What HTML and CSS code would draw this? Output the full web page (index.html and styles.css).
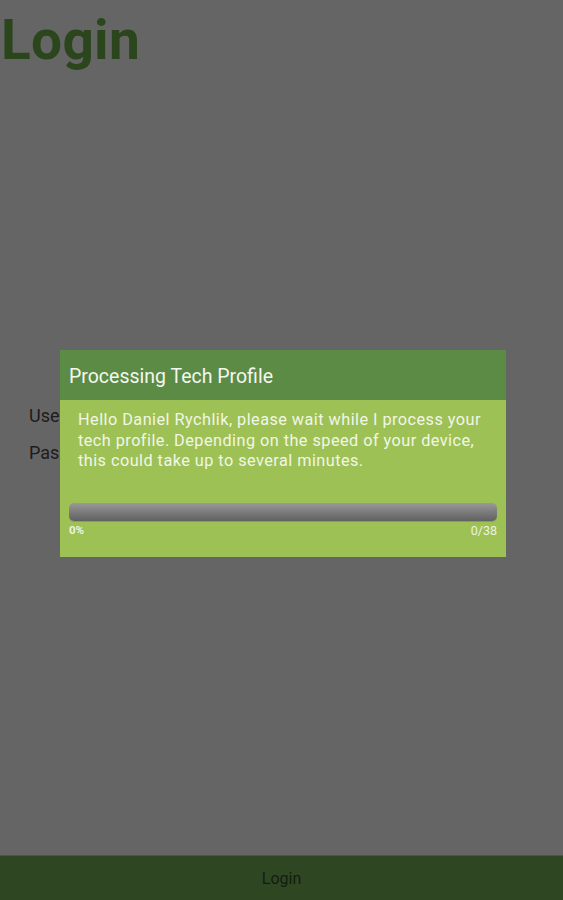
FILE: index.html
```html
<!DOCTYPE html>
<html>
<head>
<meta charset="utf-8">
<link rel="stylesheet" href="styles.css">
</head>
<body>
<div class="screen">
  <h1 class="title">Login</h1>
  <div class="form">
    <div class="label">Username</div>
    <div class="label">Password</div>
  </div>
  <div class="footer">Login</div>
  <div class="dialog">
    <div class="dialog-head">Processing Tech Profile</div>
    <div class="dialog-body">
      <p class="msg">Hello Daniel Rychlik, please wait while I process your tech profile. Depending on the speed of your device, this could take up to several minutes.</p>
      <div class="bar"></div>
      <div class="bar-labels"><span class="pct">0%</span><span class="count">0/38</span></div>
    </div>
  </div>
</div>
</body>
</html>
```
FILE: styles.css
```css
html, body { margin: 0; padding: 0; }
body { font-family: Roboto, "Noto Sans", sans-serif; background: #666566; }
.screen { position: relative; width: 563px; height: 900px; display: flex; flex-direction: column; overflow: hidden; }
.title { margin: 0; padding: 8px 0 0 1px; font-size: 55px; font-weight: 700; color: #2b461c; line-height: 64px; letter-spacing: 0.3px; }
.form { flex: 1; padding: 334px 0 0 29px; }
.label { font-size: 18px; color: #1c1c1c; line-height: 20px; height: 37px; }
.footer { height: 44px; background: #2f4623; border-top: 1px solid #465a3c; color: #141d0f; font-size: 16px; display: flex; align-items: center; justify-content: center; }
.dialog { position: absolute; left: 60px; top: 350px; width: 446px; }
.dialog-head { height: 50px; background: #5c8b46; color: #f4f7ee; font-size: 19.5px; display: flex; align-items: center; padding-left: 9px; padding-top: 2px; box-sizing: border-box; }
.dialog-body { background: #9dc155; padding: 10px 9px 19px 9px; }
.msg { margin: 0 0 31px 9px; color: #f2f6e6; font-size: 16.3px; line-height: 20.5px; letter-spacing: 0.45px; }
.bar { height: 18px; border-radius: 5px; background: linear-gradient(#9a9a9a 0%, #7e7e7e 45%, #616161 100%); box-shadow: 0 1px 0 rgba(0,0,0,0.15); }
.bar-labels { display: flex; justify-content: space-between; margin-top: 2px; font-size: 12.5px; color: #eef3e0; line-height: 15px; }
.pct { font-weight: 700; font-size: 11.5px; }
```
